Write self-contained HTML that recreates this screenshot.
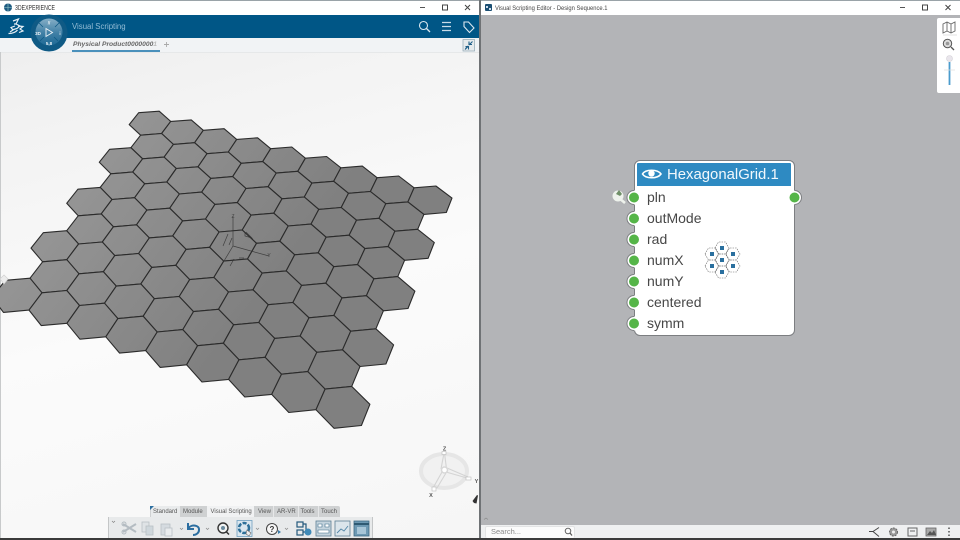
<!DOCTYPE html>
<html><head><meta charset="utf-8"><style>
html,body{margin:0;padding:0;width:960px;height:540px;overflow:hidden;background:#fff}
body{font-family:"Liberation Sans",sans-serif;position:relative}
.a{position:absolute;white-space:nowrap}
svg{position:absolute;left:0;top:0}
.t{position:absolute;top:508px;font-size:6px;line-height:9px;color:#555;white-space:nowrap}
.p{position:absolute;left:647px;font-size:14px;line-height:17px;color:#474747;white-space:nowrap}
</style></head><body>
<!-- left background -->
<div class="a" style="left:0;top:0;width:480px;height:540px;background:linear-gradient(165deg,#ececec 0,#f3f3f3 22%,#fbfbfb 55%,#f6f6f6 100%)"></div>
<!-- right background -->
<div class="a" style="left:481px;top:15px;width:479px;height:510px;background:#b3b4b7"></div>
<div class="a" style="left:0;top:0;width:960px;height:15px;background:#fff"></div>
<div class="a" style="left:0;top:0;width:960px;height:1px;background:#9aa3a8"></div>
<div class="a" style="left:479px;top:0;width:2px;height:540px;background:#6f7275"></div>
<div class="a" style="left:0;top:15px;width:479px;height:23px;background:#005686"></div>
<div class="a" style="left:0;top:38px;width:479px;height:14px;background:#f1f3f5;border-bottom:1px solid #e6e8e9"></div>
<div class="a" style="left:0;top:52px;width:1px;height:488px;background:#c8cacb"></div>
<div class="a" style="left:15px;top:4px;font-size:7px;color:#333;line-height:9px;transform:scaleX(.74);transform-origin:0 0">3DEXPERIENCE</div>
<div class="a" style="left:72px;top:21px;font-size:7.8px;color:#93bcd5;line-height:12px">Visual Scripting</div>
<div class="a" style="left:73px;top:40px;font-size:6.7px;font-weight:bold;font-style:italic;color:#666;line-height:10px">Physical Product0000000<span style="color:#bbb">1</span></div>
<div class="a" style="left:72px;top:50px;width:88px;height:2px;background:#4a90bb;z-index:1"></div>
<div class="a" style="left:495px;top:4px;font-size:6.6px;color:#444;line-height:9px;transform:scaleX(.88);transform-origin:0 0">Visual Scripting Editor - Design Sequence.1</div>

<svg id="hex" width="480" height="540" viewBox="0 0 480 540"></svg>

<svg width="960" height="540" viewBox="0 0 960 540">
<defs><linearGradient id="g" x1="0" y1="0" x2="0" y2="1"><stop offset="0" stop-color="#86aec6"/><stop offset=".55" stop-color="#3f7fa5"/><stop offset="1" stop-color="#1e6a96"/></linearGradient></defs>
<!-- title icons -->
<circle cx="8" cy="7.5" r="4" fill="#1d5a80"/><path d="M4 7.5h8M8 3.500v8" stroke="#9cc" stroke-width=".6"/>
<path d="M420 7.500h5" stroke="#555" stroke-width="1"/>
<rect x="442.500" y="5" width="5" height="5" fill="none" stroke="#444" stroke-width="1"/>
<path d="M465 5l5 5M470 5l-5 5" stroke="#444" stroke-width="1"/>
<rect x="485" y="4" width="7" height="7" rx="1" fill="#1c4f73"/><path d="M486 6h2v2h-2zM489 8h2v2h-2z" fill="#cde"/>
<path d="M900 7.500h5" stroke="#555" stroke-width="1"/>
<rect x="922.500" y="5" width="5" height="5" fill="none" stroke="#444" stroke-width="1"/>
<path d="M945.500 5l5 5M950.500 5l-5 5" stroke="#444" stroke-width="1"/>
<!-- DS logo -->
<path d="M13 21l5.500-2-2.500 5 4 2-3 2.500-5 1.500M16 24l-2 0M8.500 33.500c4 0 7-1 9-3.500M15 26l-4 1.500 2 2.500-3 2M18 26l5 .5-3 2.500 3 2-4 1.500" fill="none" stroke="#e6eff5" stroke-width="1.200"/>
<!-- compass -->
<circle cx="49" cy="33" r="18.500" fill="#0f5a85"/>
<circle cx="49" cy="32" r="13.500" fill="url(#g)"/>
<path d="M46 28.500l6.500 4-6.500 4z" fill="none" stroke="#eef4f8" stroke-width=".9"/>
<path d="M39 23l4 4M59 23l-4 4M40 41l4-4M58 41l-4-4" stroke="#0f5a85" stroke-width=".8"/>
<text x="38" y="35" font-size="4.500" font-weight="bold" fill="#eef4f8" font-family="Liberation Sans" text-anchor="middle">3D</text>
<text x="49" y="45" font-size="4.500" font-weight="bold" fill="#eef4f8" font-family="Liberation Sans" text-anchor="middle">5,8</text>
<text x="60" y="35" font-size="4.500" font-weight="bold" fill="#eef4f8" font-family="Liberation Sans" text-anchor="middle">i</text>
<text x="49" y="24.500" font-size="4.500" font-weight="bold" fill="#eef4f8" font-family="Liberation Sans" text-anchor="middle">//</text>
<!-- top right icons -->
<circle cx="423.500" cy="25.500" r="4" fill="none" stroke="#dbe8f0" stroke-width="1.100"/><path d="M426.500 28.500l3.500 3.500" stroke="#dbe8f0" stroke-width="1.300"/>
<path d="M442 22.500h9M442 26.500h9M442 30.500h9" stroke="#c9dce8" stroke-width="1.200"/>
<path d="M464 22h4.500l5.500 6-4.500 4.500-5.500-6z" fill="none" stroke="#dbe8f0" stroke-width="1.100"/>
<path d="M164 44.500h5M166.500 42v5" stroke="#aaa" stroke-width=".9"/>
<!-- expand button -->
<rect x="463" y="39.500" width="11.500" height="11.500" fill="#e6eaec" stroke="#8fa5b3" stroke-width=".7"/>
<path d="M465.500 48.500l2.500-2.500M468.500 42.500" stroke="#1f5f88" stroke-width="1" fill="none"/>
<path d="M465 49.500l3.500-3.500M465.500 46.500h3v3M472.500 41.500l-3.500 3.500M472 44.500h-3v-3" stroke="#1f5f88" stroke-width="1.100" fill="none"/>
<!-- axes overlay -->
<g stroke="#333" stroke-width=".7" fill="none" opacity=".85">
<path d="M233 246V216M233 246l36 10M233 246l-12 20M228 234l-5 12M232 238l-3 7M245 233v3l7 2l-6-6"/>
<path d="M234 259l-4 7M239 258l5 0"/>
</g>
<text x="233" y="218" font-size="5" fill="#444" font-family="Liberation Sans" text-anchor="middle">Z</text>
<text x="269" y="257" font-size="5" fill="#444" font-family="Liberation Sans" text-anchor="middle">Y</text>
<path d="M0 279l4-4 4 4-4 5z" fill="#ececec" stroke="#d0d0d0" stroke-width=".7"/>
<!-- compass bottom -->
<g fill="none">
<ellipse cx="444" cy="471" rx="23" ry="17" fill="#f1f1f1" stroke="#e6e6e6" stroke-width="4"/>
<path d="M444 453l-3 16M444.500 453l2 16M442 472l-9 16M446 473l-9 15M447 468l21 9M446 472l21 6" stroke="#d4d4d4" stroke-width="1.100"/>
<circle cx="444.500" cy="470" r="3" fill="#fff" stroke="#d8d8d8" stroke-width="1.500"/>
</g>
<rect x="442" y="451.500" width="4" height="3" fill="#fff" stroke="#bbb" stroke-width=".6"/>
<rect x="466" y="477" width="5" height="3" fill="#fff" stroke="#bbb" stroke-width=".6"/>
<rect x="432" y="487" width="4" height="4" fill="#fff" stroke="#bbb" stroke-width=".6"/>
<text x="444.500" y="450.500" font-size="5.500" font-weight="bold" fill="#555" font-family="Liberation Sans" text-anchor="middle">Z</text>
<text x="476.500" y="483" font-size="5.500" font-weight="bold" fill="#555" font-family="Liberation Sans" text-anchor="middle">Y</text>
<text x="431" y="497" font-size="5.500" font-weight="bold" fill="#555" font-family="Liberation Sans" text-anchor="middle">X</text>
<path d="M472.500 501l4.500-6 1 .5-1.500 8-2.500-.5z" fill="#333"/>
<path d="M484 519.500l2-1.500 2 1.500" stroke="#888" stroke-width=".6" fill="none"/>
</svg>

<!-- bottom toolbar -->
<div class="a" style="left:150px;top:506px;width:190px;height:11px;background:#cfd1d2;border-radius:2px 2px 0 0"></div>
<div class="a" style="left:151px;top:506px;width:29px;height:11px;background:#e9ebec"></div>
<div class="a" style="left:207px;top:506px;width:47px;height:11px;background:#f1f2f3"></div>
<div class="a" style="left:273px;top:506px;width:1px;height:11px;background:#e6e7e8"></div>
<div class="a" style="left:298px;top:506px;width:1px;height:11px;background:#e6e7e8"></div>
<div class="a" style="left:318px;top:506px;width:1px;height:11px;background:#e6e7e8"></div>
<div class="t" style="left:153px">Standard</div>
<div class="t" style="left:183px">Module</div>
<div class="t" style="left:210.500px">Visual Scripting</div>
<div class="t" style="left:258px">View</div>
<div class="t" style="left:277px">AR-VR</div>
<div class="t" style="left:300.500px">Tools</div>
<div class="t" style="left:321px">Touch</div>
<div class="a" style="left:108px;top:517px;width:265px;height:21px;background:#e8eaeb;border-left:1px solid #c4c6c7;border-right:1px solid #c4c6c7;box-sizing:border-box"></div>
<div class="a" style="left:0;top:538px;width:960px;height:2px;background:#3b3b3b"></div>
<!-- search bar -->
<div class="a" style="left:481px;top:525px;width:479px;height:13px;background:#eff0f1"></div>
<div class="a" style="left:485px;top:526px;width:90px;height:12px;background:#fbfbfb;border:1px solid #e2e3e4;border-bottom:0;border-radius:2px;box-sizing:border-box"></div>
<div class="a" style="left:491px;top:527px;font-size:7.500px;line-height:10px;color:#8a8a8a">Search...</div>

<svg width="960" height="540" viewBox="0 0 960 540">
<path d="M150 510v-4h4z" fill="#2c6ea0"/>
<!-- toolbar icons -->
<path d="M123 524l13 8M123 532l13-8" stroke="#b4bcc2" stroke-width="2"/><circle cx="124" cy="524" r="2" fill="none" stroke="#b4bcc2"/><circle cx="124" cy="532" r="2" fill="none" stroke="#b4bcc2"/>
<path d="M112 521l1.500 1.500 1.500-1.500" stroke="#777" stroke-width=".6" fill="none"/>
<rect x="142" y="522" width="7" height="10" fill="#dfe3e6" stroke="#b8c0c5" stroke-width=".8"/><rect x="146" y="526" width="7" height="9" fill="#cfd7dc" stroke="#b8c0c5" stroke-width=".8"/>
<rect x="161" y="524" width="9" height="11" fill="#d5dbe0" stroke="#b8c0c5" stroke-width=".8"/><rect x="165" y="528" width="7" height="8" fill="#e9ecee" stroke="#b8c0c5" stroke-width=".8"/>
<path d="M180 528l1.500 1.500 1.500-1.500M206 528l1.500 1.500 1.500-1.500M256 528l1.500 1.500 1.500-1.500M285 528l1.500 1.500 1.500-1.500" stroke="#888" stroke-width=".7" fill="none"/>
<path d="M188 523v6h6M188.500 528c3-4 11-3 10.500 2c0 3-3 5-6 5" fill="none" stroke="#2c6ea0" stroke-width="2"/>
<circle cx="223" cy="528" r="5" fill="#f1f3f3" stroke="#333" stroke-width="1.400"/><circle cx="223" cy="528" r="2" fill="#6a8a9e"/><path d="M226.500 532l2.500 2.500" stroke="#333" stroke-width="1.500"/>
<rect x="237" y="520.500" width="15" height="16" fill="#dbe7ef" stroke="#6fa0c0" stroke-width=".8"/>
<circle cx="244" cy="528" r="5" fill="none" stroke="#2e7099" stroke-width="2.500" stroke-dasharray="4 1.500"/><path d="M247 530l4 3-2 3-3-2z" fill="#eee" stroke="#666" stroke-width=".6"/>
<circle cx="272" cy="529" r="5.500" fill="#f6f6f6" stroke="#444" stroke-width="1"/><text x="272" y="532" font-size="8" font-weight="bold" fill="#333" text-anchor="middle" font-family="Liberation Sans">?</text><path d="M278 530l3 2-3 2z" fill="#3b7dab"/>
<g fill="none" stroke="#24597c" stroke-width="1.200"><rect x="297" y="522" width="6" height="5"/><rect x="297" y="530" width="6" height="5"/><path d="M303 524h3v8h-3"/></g><circle cx="308" cy="532" r="3.500" fill="#3f8ab8"/>
<rect x="316" y="521" width="15" height="15" fill="#c5d4de" stroke="#5e7f94" stroke-width=".8"/><path d="M318 524h4v3h-4zM325 524h4v3h-4zM318 530h11v3h-11z" fill="#fff" stroke="#3a6a88" stroke-width=".6"/>
<rect x="335" y="521" width="15" height="15" fill="#dbe5eb" stroke="#5e7f94" stroke-width=".8"/><path d="M337 533l4-4 3 2 4-5" fill="none" stroke="#5588a8" stroke-width=".9"/>
<rect x="354" y="521" width="15" height="15" fill="#6d99b3" stroke="#3d6b85" stroke-width=".8"/><rect x="357" y="527" width="9" height="7" fill="#a8c6d8"/><path d="M354 524h15" stroke="#2f5a73" stroke-width="2"/>
<!-- search/bottom-right icons -->
<circle cx="568" cy="531" r="2.800" fill="none" stroke="#555" stroke-width=".9"/><path d="M570 533l2 2.500" stroke="#555" stroke-width="1.200"/>
<path d="M869 531.500l4 0M873 531.500l6-4M873 531.500l6 5" stroke="#444" stroke-width="1" fill="none"/>
<circle cx="893.500" cy="532" r="4" fill="#999" stroke="#666" stroke-width="1" stroke-dasharray="2 1"/><circle cx="893.500" cy="532" r="1.500" fill="#eee"/>
<rect x="908" y="528" width="9" height="8" fill="none" stroke="#666" stroke-width="1"/><path d="M910 531h5" stroke="#666"/>
<rect x="926" y="528" width="10" height="8" fill="#aaa" stroke="#666" stroke-width=".8"/><path d="M927 535l3-4 2 2 2-3 2 5z" fill="#555"/>
<path d="M949 527.500v1.500M949 531v1.500M949 534.500v1.500" stroke="#444" stroke-width="1.400"/>
</svg>

<!-- right mini panel -->
<div class="a" style="left:937px;top:18px;width:23px;height:75px;background:#fff;border-radius:2px 0 0 2px"></div>
<svg width="960" height="540" viewBox="0 0 960 540">
<path d="M943 24l4-2 4 2 4-2v9l-4 2-4-2-4 2zM947 22v9M951 24v9" fill="none" stroke="#666" stroke-width=".9"/>
<path d="M943 35h14" stroke="#ddd" stroke-width=".8"/>
<circle cx="947.500" cy="43.500" r="4.200" fill="#ddd" stroke="#555" stroke-width="1"/><circle cx="947.500" cy="43.500" r="1.800" fill="#999"/><path d="M951 47l3 3" stroke="#555" stroke-width="1.300"/>
<path d="M949.500 62v23" stroke="#4b9ccd" stroke-width="1.800"/><path d="M944 70h11" stroke="#ddd" stroke-width=".7"/>
<circle cx="949.500" cy="58.500" r="3" fill="#e9e6ec" stroke="#d5d2d8" stroke-width=".6"/>
</svg>

<!-- node -->
<div class="a" style="left:634px;top:160px;width:161px;height:176px;box-sizing:border-box;background:#fff;border:1px solid #7c7e81;border-radius:6px"></div>
<div class="a" style="left:637px;top:163px;width:154px;height:23px;background:#2e8ac2;border-radius:1px 1px 0 0"></div>
<div class="a" style="left:667px;top:164.500px;font-size:14.900px;line-height:20px;color:#f2f8fc">HexagonalGrid.1</div>
<div class="p" style="top:189px">pln</div>
<div class="p" style="top:210px">outMode</div>
<div class="p" style="top:231px">rad</div>
<div class="p" style="top:252px">numX</div>
<div class="p" style="top:273px">numY</div>
<div class="p" style="top:294px">centered</div>
<div class="p" style="top:315px">symm</div>
<svg width="960" height="540" viewBox="0 0 960 540">
<!-- eye -->
<path d="M642.500 174c3-5 15-5 18.500 0c-3.500 5-15.500 5-18.500 0z" fill="none" stroke="#fff" stroke-width="1.600"/><circle cx="651.500" cy="173.500" r="3.200" fill="#fff"/>
<!-- wrench -->
<circle cx="618" cy="196" r="5.500" fill="#eef2ec"/><path d="M619 190l3 4-2 2-4-2z" fill="#6f8f68"/><path d="M619 198l6 5" stroke="#eef2ec" stroke-width="2.600"/>
<g fill="#fff">
<circle cx="634" cy="197.500" r="7"/><circle cx="634" cy="218.500" r="7"/><circle cx="634" cy="239.500" r="7"/><circle cx="634" cy="260.500" r="7"/><circle cx="634" cy="281.500" r="7"/><circle cx="634" cy="302.500" r="7"/><circle cx="634" cy="323.500" r="7"/><circle cx="794.500" cy="197.500" r="7"/>
</g>
<g fill="none" stroke="#7c7e81" stroke-width="1">
<path d="M634 190.500a7 7 0 0 0 0 14M634 211.500a7 7 0 0 0 0 14M634 232.500a7 7 0 0 0 0 14M634 253.500a7 7 0 0 0 0 14M634 274.500a7 7 0 0 0 0 14M634 295.500a7 7 0 0 0 0 14M634 316.500a7 7 0 0 0 0 14M794.500 190.500a7 7 0 0 1 0 14"/>
</g>
<g fill="#55b548">
<circle cx="634" cy="197.500" r="5"/><circle cx="634" cy="218.500" r="5"/><circle cx="634" cy="239.500" r="5"/><circle cx="634" cy="260.500" r="5"/><circle cx="634" cy="281.500" r="5"/><circle cx="634" cy="302.500" r="5"/><circle cx="634" cy="323.500" r="5"/><circle cx="794.500" cy="197.500" r="5"/>
</g>
<!-- hex icon -->
<g fill="none" stroke="#666" stroke-width=".6" stroke-dasharray="1.500 1">
<path d="M715 248l3.500-6h7l3.500 6-3.500 6h-7z"/>
<path d="M705 254l3.500-6h7l3.500 6-3.500 6h-7z"/>
<path d="M726 254l3.500-6h7l3.500 6-3.500 6h-7z"/>
<path d="M715 260l3.500-6h7l3.500 6-3.500 6h-7z"/>
<path d="M705 266l3.500-6h7l3.500 6-3.500 6h-7z"/>
<path d="M726 266l3.500-6h7l3.500 6-3.500 6h-7z"/>
<path d="M715 272l3.500-6h7l3.500 6-3.500 6h-7z"/>
</g>
<g fill="#2a6f9e">
<rect x="720" y="246" width="4" height="4"/><rect x="710" y="252" width="4" height="4"/><rect x="731" y="252" width="4" height="4"/><rect x="720" y="258" width="4" height="4"/><rect x="710" y="264" width="4" height="4"/><rect x="731" y="264" width="4" height="4"/><rect x="720" y="270" width="4" height="4"/>
</g>
</svg>

<script>
(function(){
var Q=[[150,123],[430,200],[343,407],[17,295]];
var x0=Q[0][0],y0=Q[0][1],x1=Q[1][0],y1=Q[1][1],x2=Q[2][0],y2=Q[2][1],x3=Q[3][0],y3=Q[3][1];
var dx1=x1-x2,dx2=x3-x2,sx=x0-x1+x2-x3,dy1=y1-y2,dy2=y3-y2,sy=y0-y1+y2-y3;
var D=dx1*dy2-dx2*dy1,g=(sx*dy2-dx2*sy)/D,h=(dx1*sy-sx*dy1)/D;
var a=x1-x0+g*x1,b=x3-x0+h*x3,c=x0,d=y1-y0+g*y1,e=y3-y0+h*y3,f=y0;
function P(i,j){var u=(i+j/2)/8,v=j/8,w=g*u+h*v+1;return [(a*u+b*v+c)/w,(d*u+e*v+f)/w];}
var V=[[1/3,1/3],[-1/3,2/3],[-2/3,1/3],[-1/3,-1/3],[1/3,-2/3],[2/3,-1/3]];
var s='<defs><linearGradient id="hg" gradientUnits="userSpaceOnUse" x1="40" y1="130" x2="260" y2="300"><stop offset="0" stop-color="#9b9b9b"/><stop offset="1" stop-color="#808080"/></linearGradient></defs>';
for(var j=0;j<=8;j++){
 var lo=-Math.floor(j/2),hi=8-Math.ceil(j/2);
 for(var i=lo;i<=hi;i++){
  var pts=V.map(function(v){var p=P(i+v[0],j+v[1]);return p[0].toFixed(1)+','+p[1].toFixed(1)}).join(' ');
  s+='<polygon points="'+pts+'" fill="url(#hg)" stroke="#2b2b2b" stroke-width="1.100" stroke-linejoin="round"/>';
 }
}
document.getElementById('hex').innerHTML=s;
})();
</script>
</body></html>
